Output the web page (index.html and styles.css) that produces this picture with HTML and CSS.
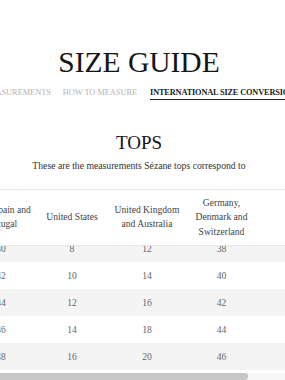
FILE: index.html
```html
<!DOCTYPE html>
<html lang="en">
<head>
<meta charset="utf-8">
<title>Size guide</title>
<link rel="stylesheet" href="styles.css">
</head>
<body>
<main class="page">
  <h1 class="title">SIZE GUIDE</h1>
  <nav class="tabs">
    <a class="tab" href="#measurements">MEASUREMENTS</a>
    <a class="tab" href="#how-to-measure">HOW TO MEASURE</a>
    <a class="tab tab--active" href="#conversion">INTERNATIONAL SIZE CONVERSION</a>
  </nav>
  <section class="section" id="conversion">
    <h2 class="section__title">TOPS</h2>
    <p class="section__intro">These are the measurements Sézane tops correspond to</p>
    <div class="table-scroll" id="tops-table">
      <table class="sizes">
        <colgroup>
          <col class="col-1">
          <col class="col-2">
          <col class="col-3">
          <col class="col-4">
        </colgroup>
        <thead>
          <tr>
            <th>Italy, Spain and Portugal</th>
            <th>United States</th>
            <th>United Kingdom and Australia</th>
            <th>Germany, Denmark and Switzerland</th>
          </tr>
        </thead>
        <tbody>
          <tr><td>40</td><td>8</td><td>12</td><td>38</td></tr>
          <tr><td>42</td><td>10</td><td>14</td><td>40</td></tr>
          <tr><td>44</td><td>12</td><td>16</td><td>42</td></tr>
          <tr><td>46</td><td>14</td><td>18</td><td>44</td></tr>
          <tr><td>48</td><td>16</td><td>20</td><td>46</td></tr>
          <tr><td>50</td><td>18</td><td>22</td><td>48</td></tr>
        </tbody>
      </table>
    </div>
    <div class="hscroll" aria-hidden="true">
      <div class="hscroll__thumb" id="tops-thumb"></div>
    </div>
  </section>
</main>
<script src="script.js"></script>
</body>
</html>
```

FILE: styles.css
```css
* {
  box-sizing: border-box;
}

html,
body {
  margin: 0;
  padding: 0;
  background: #ffffff;
  overflow: hidden;
}

body {
  width: 285px;
  height: 380px;
  font-family: "Liberation Serif", "Times New Roman", serif;
  color: #1b1b1b;
}

.title {
  margin: 48px 0 0;
  padding-right: 7px;
  font-size: 29.5px;
  line-height: 1;
  font-weight: 400;
  text-align: center;
  color: #151515;
}

.tabs {
  display: flex;
  justify-content: center;
  gap: 12px;
  margin-top: 10px;
  padding-right: 7px;
  white-space: nowrap;
  font-size: 8.3px;
  line-height: 10px;
}

.tab {
  flex: none;
  color: #b3b3b3;
  text-decoration: none;
}

.tab--active {
  margin-left: 1px;
  padding-bottom: 1px;
  color: #1a1a1a;
  font-weight: 700;
  letter-spacing: -0.15px;
  border-bottom: 1px solid #1a1a1a;
}

.section {
  margin-top: 33px;
}

.section__title {
  margin: 0;
  padding-right: 7px;
  font-size: 19px;
  line-height: 1;
  font-weight: 400;
  text-align: center;
  color: #151515;
}

.section__intro {
  margin: 8px 0 0;
  padding-right: 7px;
  font-size: 9.7px;
  line-height: 12px;
  text-align: center;
  color: #333333;
}

.table-scroll {
  margin-top: 17px;
  height: 184px;
  overflow: hidden;
  border-top: 1px solid #e8e8e8;
}

.sizes {
  table-layout: fixed;
  width: 363px;
  margin-left: -36px;
  border-collapse: separate;
  border-spacing: 0;
  font-size: 9.6px;
}

.col-1 { width: 74px; }
.col-2 { width: 68px; }
.col-3 { width: 82px; }
.col-4 { width: 139px; }

.sizes th {
  position: sticky;
  top: 0;
  padding: 6px;
  line-height: 14.5px;
  font-weight: 400;
  text-align: center;
  vertical-align: middle;
  color: #444444;
  background: #ffffff;
  border-bottom: 1px solid #e8e8e8;
}

.sizes td {
  padding: 6px;
  line-height: 15px;
  text-align: center;
  color: #666666;
}

.sizes th:last-child,
.sizes td:last-child {
  padding-right: 78px;
}

.sizes tbody tr:nth-child(odd) td {
  background: #f4f4f4;
}

.hscroll {
  height: 7px;
  background: #f7f7f7;
}

.hscroll__thumb {
  width: 87%;
  height: 100%;
  background: #c7c7c7;
  border-radius: 0 3px 3px 0;
}
```

FILE: script.js
```js
var box = document.getElementById('tops-table');
box.scrollTop = 11;
var visible = box.clientWidth;
var total = box.scrollWidth;
var thumb = document.getElementById('tops-thumb');
if (total > visible) {
  thumb.style.width = Math.round(visible / total * visible) + 'px';
}
```
